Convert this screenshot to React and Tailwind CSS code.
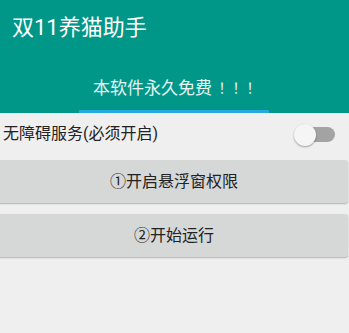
export default function App() {
  const font = { fontFamily: 'Roboto, "Noto Sans CJK SC", sans-serif' };
  const cjk = { fontFamily: '"Noto Sans CJK SC", sans-serif' };
  const tc = { fontFamily: '"Noto Sans CJK TC", sans-serif' };
  return (
    <div className="w-[349px] h-[333px] bg-[#efefef] overflow-hidden" style={font}>
      <div className="bg-[#009688] h-[113px] flex flex-col">
        <div className="h-[62px] flex items-center pl-[12px] pb-[6px]">
          <span className="text-white text-[22px] leading-[22px]">双11养猫助手</span>
        </div>
        <div className="flex-1 flex justify-center">
          <div className="w-[190px] flex flex-col ml-[-2px]">
            <div className="flex-1 flex items-center justify-center pt-[1px]">
              <span className="text-white/90 text-[17px] leading-[18px] flex items-center ml-[3px]" style={cjk}>
                <span>本软件永久免费</span>
                <span className="w-[14px] ml-[3px] text-[14px] flex justify-center" style={tc}>！</span>
                <span className="w-[14px] text-[14px] flex justify-center" style={tc}>！</span>
                <span className="w-[14px] text-[14px] flex justify-center" style={tc}>！</span>
              </span>
            </div>
            <div className="h-[3px] bg-[#27a8df]" />
          </div>
        </div>
      </div>
      <div className="h-[43px] flex items-center justify-between pl-[3px] pr-[14px]">
        <span className="text-[#222] text-[16px] leading-[16px] mb-[2px]">无障碍服务(必须开启)</span>
        <div className="relative w-[41px] h-[22px] flex items-center">
          <div className="w-[38px] h-[15px] ml-[3px] rounded-full bg-[#a3a3a3]" />
          <div className="absolute left-0 top-0 w-[22px] h-[22px] rounded-full bg-[#f5f5f5] shadow-[0_1px_2px_rgba(0,0,0,0.35)]" />
        </div>
      </div>
      <div className="flex flex-col gap-[11px] pt-[4px]">
        <div className="w-[352px] -ml-[4px] h-[43px] rounded-[3px] bg-[#d6d7d7] shadow-[0_1px_1.5px_rgba(0,0,0,0.25)] flex items-center justify-center">
          <span className="text-[#222] text-[16px] leading-[16px] ml-[4px]">①开启悬浮窗权限</span>
        </div>
        <div className="w-[352px] -ml-[4px] h-[43px] rounded-[3px] bg-[#d6d7d7] shadow-[0_1px_1.5px_rgba(0,0,0,0.25)] flex items-center justify-center">
          <span className="text-[#222] text-[16px] leading-[16px] ml-[4px]">②开始运行</span>
        </div>
      </div>
    </div>
  );
}
